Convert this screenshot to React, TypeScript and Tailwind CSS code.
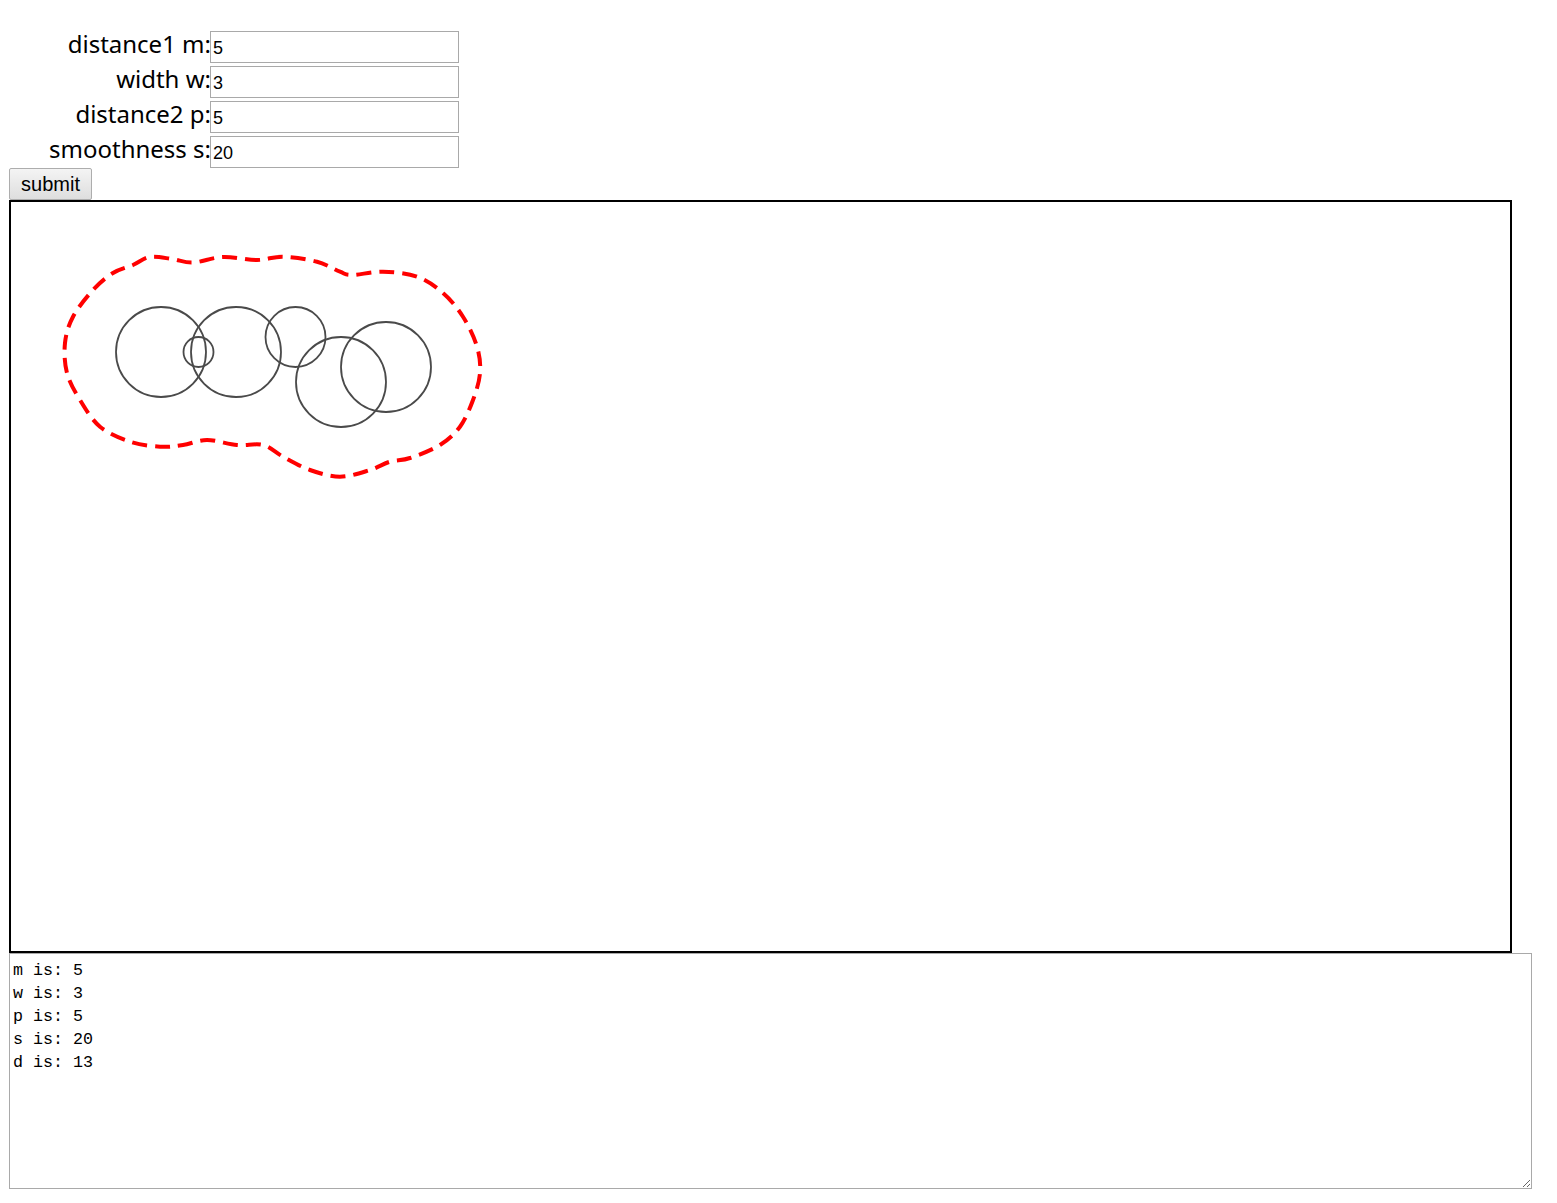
import React from "react";

type P = [number, number];

const curvePts: P[] = [
  [133, 265], [150, 257], [172, 259], [193, 262.5], [223, 257], [257, 260],
  [283, 256.7], [317, 261.7], [340, 271.7], [352, 275], [383, 271.7],
  [417, 276.7], [443, 293], [463, 316.7], [477, 346.7], [480, 373],
  [473, 400], [460, 426.7], [440, 445], [410, 458], [390, 461.7],
  [370, 470], [340, 476.7], [310, 470], [283, 456.7], [263, 445],
  [237, 445], [207, 440], [183, 445], [160, 446.7], [130, 441.7],
  [100, 426.7], [80, 400], [67, 373], [65, 343], [73, 316.7], [93, 290],
  [113, 273],
];

function closedCurve(pts: P[]): string {
  const n = pts.length;
  let d = `M ${pts[0][0]} ${pts[0][1]}`;
  for (let i = 0; i < n; i++) {
    const p0 = pts[(i - 1 + n) % n];
    const p1 = pts[i];
    const p2 = pts[(i + 1) % n];
    const p3 = pts[(i + 2) % n];
    const c1x = p1[0] + (p2[0] - p0[0]) / 6;
    const c1y = p1[1] + (p2[1] - p0[1]) / 6;
    const c2x = p2[0] - (p3[0] - p1[0]) / 6;
    const c2y = p2[1] - (p3[1] - p1[1]) / 6;
    d += ` C ${c1x.toFixed(2)} ${c1y.toFixed(2)} ${c2x.toFixed(2)} ${c2y.toFixed(2)} ${p2[0]} ${p2[1]}`;
  }
  return d + " Z";
}

const circles: { cx: number; cy: number; r: number }[] = [
  { cx: 161, cy: 352, r: 45 },
  { cx: 236, cy: 352, r: 45 },
  { cx: 198.5, cy: 352, r: 15 },
  { cx: 295.5, cy: 337, r: 30 },
  { cx: 341, cy: 382, r: 45 },
  { cx: 386, cy: 367, r: 45 },
];

const fields = [
  { label: "distance1 m:", value: "5" },
  { label: "width w:", value: "3" },
  { label: "distance2 p:", value: "5" },
  { label: "smoothness s:", value: "20" },
];

export default function App() {
  return (
    <div className="bg-white min-h-[1203px] pt-[31px] pl-[9px] text-black">
      <div className="flex flex-col gap-[3px]">
        {fields.map((f) => (
          <div key={f.label} className="flex items-start h-[32px]">
            <label className="w-[202px] pt-[1px] text-right text-[24px] leading-[24px] font-['Noto_Sans',sans-serif] text-black whitespace-nowrap">
              {f.label}
            </label>
            <input
              type="text"
              defaultValue={f.value}
              className="-ml-px w-[249px] h-[32px] border border-[#a9a9a9] pl-[2px] pt-[2px] text-[18px] font-['Liberation_Sans',Arial,sans-serif] text-black outline-none bg-white"
            />
          </div>
        ))}
      </div>
      <button
        type="button"
        className="block w-[83px] h-[32px] border border-[#adadad] bg-gradient-to-b from-[#f4f4f4] to-[#dedede] rounded-[2px] text-[20px] leading-none font-['Liberation_Sans',Arial,sans-serif] text-black"
      >
        submit
      </button>
      <div className="w-[1503px] h-[753px] border-2 border-black bg-white">
        <svg
          className="block w-full h-full"
          viewBox="11 202 1499 749"
          xmlns="http://www.w3.org/2000/svg"
        >
          {circles.map((c, i) => (
            <circle
              key={i}
              cx={c.cx}
              cy={c.cy}
              r={c.r}
              fill="none"
              stroke="#4a4a4a"
              strokeWidth={1.8}
            />
          ))}
          <path
            d={closedCurve(curvePts)}
            fill="none"
            stroke="#ff0000"
            strokeWidth={4}
            strokeDasharray="15 8"
            strokeLinecap="butt"
          />
        </svg>
      </div>
      <textarea
        readOnly
        defaultValue={"m is: 5\nw is: 3\np is: 5\ns is: 20\nd is: 13"}
        className="block w-[1523px] h-[236px] border border-[#a9a9a9] pt-[5px] pl-[3px] text-[16.67px] leading-[23px] font-['Liberation_Mono','Courier_New',monospace] text-black outline-none bg-white resize"
      />
    </div>
  );
}
